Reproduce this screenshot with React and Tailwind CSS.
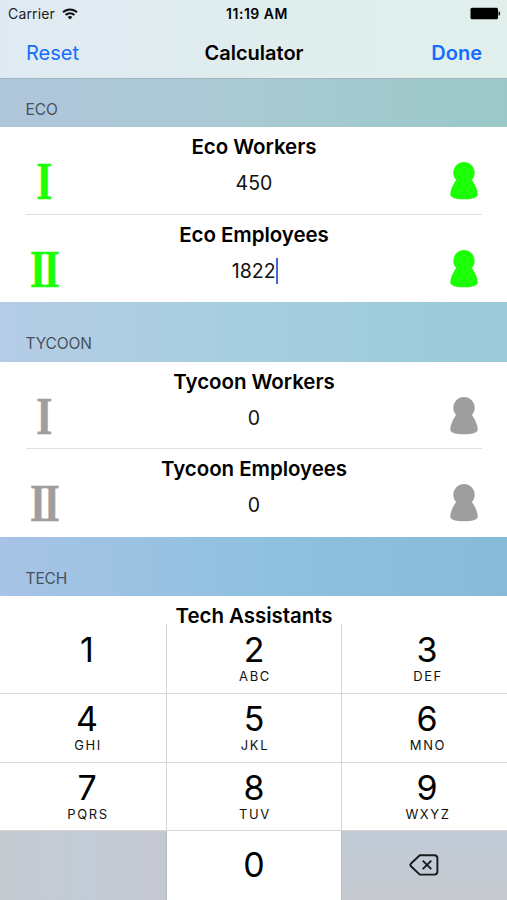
import React from 'react';

const sections = [
    {
        title: 'ECO',
        header: 'h-12 pt-[19px] bg-linear-to-r from-[#b0c6db] via-[#a8cad3] to-[#9bc8c8]',
        color: 'text-[#1dff05]',
        rows: [
            { label: 'Eco Workers', value: '450', numeral: 'I', height: 'h-[88px]' },
            { label: 'Eco Employees', value: '1822', numeral: 'II', height: 'h-[87px]', active: true },
        ],
    },
    {
        title: 'TYCOON',
        header: 'h-[60px] pt-[30px] bg-linear-to-r from-[#b5cde7] via-[#a5cedf] to-[#9ac9d8]',
        color: 'text-[#9e9e9e]',
        rows: [
            { label: 'Tycoon Workers', value: '0', numeral: 'I', height: 'h-[87px]' },
            { label: 'Tycoon Employees', value: '0', numeral: 'II', height: 'h-[88px]' },
        ],
    },
    {
        title: 'TECH',
        header: 'h-[59px] pt-[30px] bg-linear-to-r from-[#a7c3e6] via-[#90c1df] to-[#86bbd8]',
        color: 'text-[#9e9e9e]',
        rows: [{ label: 'Tech Assistants', height: 'h-7' }],
    },
];

const keys = [
    { digit: '1', letters: '' },
    { digit: '2', letters: 'ABC' },
    { digit: '3', letters: 'DEF' },
    { digit: '4', letters: 'GHI' },
    { digit: '5', letters: 'JKL' },
    { digit: '6', letters: 'MNO' },
    { digit: '7', letters: 'PQRS' },
    { digit: '8', letters: 'TUV' },
    { digit: '9', letters: 'WXYZ' },
];

// the outer columns sit slightly right of their centre
const columns = ['border-r pl-[8px]', 'border-r', 'pl-[5px]'];

function WifiIcon() {
    return (
        <svg className="ml-[7px] h-[12px] w-[16px]" viewBox="0 0 16 12" fill="none" stroke="#111" strokeWidth="2">
            <path d="M1 4.3a10 10 0 0 1 14 0" />
            <path d="M3.6 7a6.2 6.2 0 0 1 8.8 0" />
            <path d="M8 11.6 5.6 9.1a3.4 3.4 0 0 1 4.8 0z" fill="#111" stroke="none" />
        </svg>
    );
}

function BatteryIcon() {
    return (
        <svg className="h-[13px] w-[31px]" viewBox="0 0 31 13">
            <rect x="0.5" y="0.8" width="27.5" height="11.5" rx="1.5" fill="#000" />
            <path d="M28.6 4.2c2 .6 2 4 0 4.6z" fill="#000" />
        </svg>
    );
}

function PersonIcon() {
    return (
        <svg className="h-[38px] w-7" viewBox="0 0 28 38" fill="currentColor">
            <circle cx="14" cy="10.8" r="10.7" />
            <path d="M6.2 18h15.6c3 4 5.800 9.500 5.900 14.500 0 3.600-6 4.700-13.700 4.700S.3 36.100.3 32.500C.4 27.500 3.200 22 6.200 18z" />
        </svg>
    );
}

function DeleteIcon() {
    return (
        <svg className="h-[22px] w-[30px]" viewBox="0 0 30 22" fill="none" stroke="#17191c" strokeWidth="1.9" strokeLinejoin="round">
            <path d="M10.8 1.2h14.600a3 3 0 0 1 3 3v13.400a3 3 0 0 1-3 3H10.800L2 12.300q-1.200-1.400 0-2.800z" />
            <path d="M13.7 6.600l8.600 8.600M22.300 6.600l-8.600 8.600" />
        </svg>
    );
}

function Row({ row, color, last }) {
    return (
        <div className={`flex bg-white pr-[25px] pl-[26px] ${row.height}`}>
            <div className={`flex w-full justify-between ${last ? '' : 'border-b border-[#dedede]'}`}>
                <div className={`flex w-9 justify-center pt-[28px] font-['Liberation_Serif',serif] text-[53px] leading-[53px] font-bold [-webkit-text-stroke:0.5px_currentColor] ${color}`}>
                    {row.numeral && (
                        <span className={`origin-center scale-x-[0.78] ${row.numeral === 'II' ? '-ml-px tracking-[-3px]' : ''}`}>{row.numeral}</span>
                    )}
                </div>
                <div className="flex flex-col items-center pt-3">
                    <div className="text-[20.5px] leading-4 font-semibold tracking-[-0.05px]">{row.label}</div>
                    {row.value && (
                        <div className="mt-[15px] flex h-[26px] items-center text-[19.5px] leading-[26px] text-[#111]">
                            {row.value}
                            {row.active && <span className="-mr-[2px] h-[26px] w-[2.5px] bg-[#4466d8]" />}
                        </div>
                    )}
                </div>
                <div className={`flex w-9 justify-center pt-[35px] ${color}`}>
                    {row.numeral && <PersonIcon />}
                </div>
            </div>
        </div>
    );
}

function Section({ section }) {
    return (
        <section>
            <h2 className={`pl-[25.5px] text-[15.5px] leading-[23px] tracking-[-0.1px] text-[#47525a] ${section.header}`}>{section.title}</h2>
            {section.rows.map((row, i) => (
                <Row key={row.label} row={row} color={section.color} last={i === section.rows.length - 1} />
            ))}
        </section>
    );
}

function Keypad() {
    return (
        <div className="grid h-[276px] shrink-0 grid-cols-[167px_175px_165px] grid-rows-[70px_69px_68px_69px] bg-white">
            {keys.map((key, i) => (
                <div
                    key={key.digit}
                    className={`flex flex-col items-center border-b border-[#d6d6d7] ${i < 3 ? 'pt-[6px]' : 'pt-[5px]'} ${columns[i % 3]}`}
                >
                    <span className="text-[34px] leading-10 text-black">{key.digit}</span>
                    <span className="pl-[2px] text-[13px] leading-[13px] tracking-[1.6px] text-[#111]">{key.letters}</span>
                </div>
            ))}
            <div className="border-r border-[#b5babf] bg-linear-to-r from-[#c6cad1] via-[#c2ccd7] to-[#c5c8d0]" />
            <div className="flex justify-center border-r border-[#b5babf] pt-[13px] text-[34px] leading-[42px]">0</div>
            <div className="flex justify-center bg-linear-to-b from-[#c1ccd7] to-[#c6c9d0] pt-[23px] pr-px">
                <DeleteIcon />
            </div>
        </div>
    );
}

export default function App() {
    return (
        <div className="flex h-[900px] w-[507px] flex-col overflow-hidden bg-white font-[Inter,sans-serif] text-black">
            <header className="h-[79px] shrink-0 border-b border-[#a3b5bb] bg-linear-to-r from-[#e0eaf3] via-[#dfedee] to-[#e1efec]">
                <div className="grid h-[27px] grid-cols-3 items-center pr-[6px] pl-2 text-[14px]">
                    <div className="flex items-center">
                        <span className="tracking-[0.15px] text-[#222]">Carrier</span>
                        <WifiIcon />
                    </div>
                    <div className="pl-[5px] text-center font-semibold tracking-[0.5px]">11:19 AM</div>
                    <div className="flex justify-end">
                        <BatteryIcon />
                    </div>
                </div>
                <div className="grid h-[51px] grid-cols-3 items-center pt-px pr-[25px] pl-[26px] text-[20px]">
                    <button className="text-left text-[#146dfb]">Reset</button>
                    <h1 className="text-center font-semibold">Calculator</h1>
                    <button className="text-right font-semibold text-[#146dfb]">Done</button>
                </div>
            </header>
            <main className="h-[545px] shrink-0">
                {sections.map((section) => (
                    <Section key={section.title} section={section} />
                ))}
            </main>
            <Keypad />
        </div>
    );
}
